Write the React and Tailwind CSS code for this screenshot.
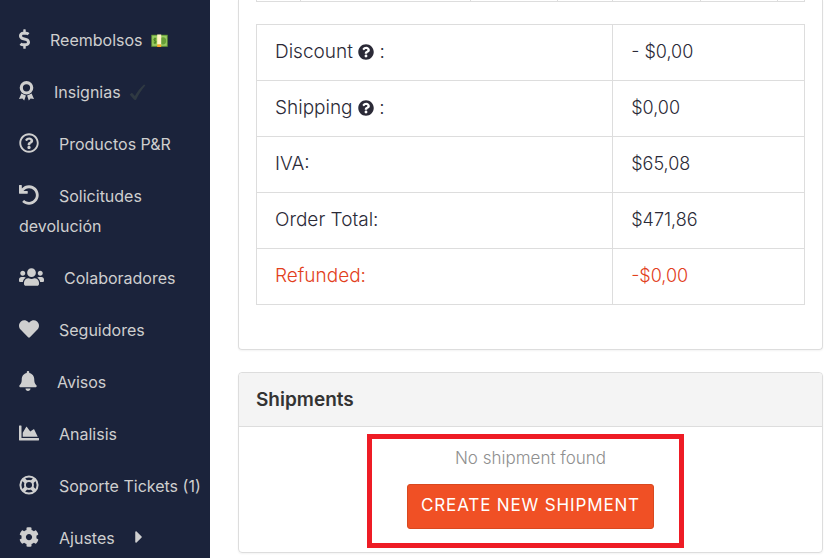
import React from 'react';
import {
  FaDollarSign, FaRegQuestionCircle, FaUndo, FaUsers, FaHeart, FaBell,
  FaChartArea, FaCog, FaCaretRight, FaQuestionCircle
} from 'react-icons/fa';

const AwardIcon = ({ className }) => (
  <svg viewBox="0 0 15 20" className={className} aria-hidden="true">
    <circle cx="7.5" cy="6.8" r="5.2" fill="none" stroke="currentColor" strokeWidth="3.2" />
    <path d="M2.4 12.6Q4.2 13.8 6.9 14.6L5.2 19.4L3.4 17.6L0 18Z" fill="currentColor" />
    <path d="M12.6 12.6Q10.8 13.8 8.1 14.6L9.8 19.4L11.6 17.6L15 18Z" fill="currentColor" />
  </svg>
);

const LifeRingIcon = ({ className }) => (
  <svg viewBox="0 0 20 20" className={className} fill="none" stroke="currentColor" aria-hidden="true">
    <circle cx="10" cy="10" r="8.6" strokeWidth="2" />
    <circle cx="10" cy="10" r="4" strokeWidth="1.9" />
    <path d="M4 4L7.2 7.2M16 4L12.8 7.2M4 16L7.2 12.8M16 16L12.8 12.8" strokeWidth="3.8" />
  </svg>
);

const BanknoteIcon = () => (
  <svg viewBox="0 0 17 14" className="ml-1 inline-block h-[14px] w-[17px] align-[-2px]" aria-hidden="true">
    <rect x="0.3" y="0.8" width="16.4" height="12" fill="#689f38" />
    <rect x="1.2" y="1.8" width="14.6" height="10" fill="#9ccc65" />
    <ellipse cx="12" cy="6.8" rx="3.2" ry="3.6" fill="#689f38" />
    <ellipse cx="4" cy="6.8" rx="2.6" ry="3.6" fill="#8bc34a" />
    <path d="M5 5.2C4.4 4.4 2.8 4.6 2.9 5.7C3 6.9 5.1 6.6 5.1 7.9C5.1 9 3.4 9.2 2.8 8.3M4 3.8V9.9" fill="none" stroke="#33691e" strokeWidth="0.7" />
    <rect x="6.2" y="0.5" width="4" height="10" fill="#fff3c4" />
    <rect x="6.2" y="10.5" width="4" height="2.5" fill="#ffa726" />
  </svg>
);

const TickIcon = () => (
  <svg viewBox="0 0 17 17" className="ml-1 inline-block h-[17px] w-[17px] align-[-3px]" aria-hidden="true">
    <path d="M0.7 10.4L2.9 8.8L5.9 12.1C8.2 8 11 4.1 15 0.6L16.4 1.2C12.6 5.8 9.6 10.4 7.2 15.4Q5.8 16.6 4.7 15.2Z" fill="#2f3942" />
  </svg>
);

const menu = [
  { label: 'Reembolsos', icon: FaDollarSign, size: 'w-[11px]', extra: <BanknoteIcon /> },
  { label: 'Insignias', icon: AwardIcon, size: 'w-[15px]', extra: <TickIcon /> },
  { label: 'Productos P&R', icon: FaRegQuestionCircle, size: 'w-5' },
  { label: 'Solicitudes devolución', icon: FaUndo, size: 'w-5' },
  { label: 'Colaboradores', icon: FaUsers, size: 'w-[25px]' },
  { label: 'Seguidores', icon: FaHeart, size: 'w-5' },
  { label: 'Avisos', icon: FaBell, size: 'w-[18px]' },
  { label: 'Analisis', icon: FaChartArea, size: 'w-5' },
  { label: 'Soporte Tickets (1)', icon: LifeRingIcon, size: 'w-5' },
  { label: 'Ajustes', icon: FaCog, size: 'w-5', extra: <FaCaretRight className="ml-4 inline-block h-5 w-2 align-[-3px]" /> },
];

const totals = [
  { label: 'Discount', help: true, value: '- $0,00' },
  { label: 'Shipping', help: true, value: '$0,00' },
  { label: 'IVA:', value: '$65,08' },
  { label: 'Order Total:', value: '$471,86' },
  { label: 'Refunded:', value: '-$0,00', refunded: true },
];

const Sidebar = () => (
  <nav className="w-[210px] shrink-0 overflow-hidden bg-[#1b233b] pt-[14px] text-[#cfcfcf]">
    <ul>
      {menu.map(({ label, icon: Icon, size, extra }) => (
        <li key={label}>
          <a href="#" className="block py-[11px] pl-[19px] text-base leading-[30px] hover:text-white">
            <Icon className={`mr-5 inline-block h-5 align-[-3px] ${size}`} />
            {label} {extra}
          </a>
        </li>
      ))}
    </ul>
  </nav>
);

const ItemsTable = () => (
  <table className="w-full table-fixed border-collapse border border-t-0 border-[#dddddd]">
    <tbody>
      <tr className="h-px">
        <td className="w-[8%] border-r border-[#dddddd] p-0" />
        <td className="w-[31%] border-r border-[#dddddd] p-0" />
        <td className="w-[16%] border-r border-[#dddddd] p-0" />
        <td className="w-[10%] border-r border-[#dddddd] p-0" />
        <td className="w-[16%] border-r border-[#dddddd] p-0" />
        <td className="w-[14%] border-r border-[#dddddd] p-0" />
        <td className="p-0" />
      </tr>
    </tbody>
  </table>
);

const TotalsTable = () => (
  <table className="mt-[22px] w-full table-fixed border-collapse text-lg font-light text-[#2b2a37]">
    <tbody>
      {totals.map((row) => (
        <tr key={row.label} className={`h-14 ${row.refunded ? 'text-[#e2401c]' : ''}`}>
          <th scope="row" className="w-[65%] border border-[#dddddd] px-[18px] py-0 text-left text-[19px] font-light">
            {row.label}
            {row.help && (
              <> <FaQuestionCircle className="inline-block h-4 w-4 align-[-2px]" /> :</>
            )}
          </th>
          <td className="border border-[#dddddd] px-[18px] py-0">{row.value}</td>
        </tr>
      ))}
    </tbody>
  </table>
);

const Shipments = () => (
  <section className="mt-[22px] rounded border border-[#dddddd] shadow-xs">
    <h2 className="rounded-t border-b border-[#dddddd] bg-[#f4f4f4] px-[17px] py-[13px] text-[19px] leading-[27px] font-semibold text-[#333333]">
      Shipments
    </h2>
    <div className="flex justify-center pt-[15px] pb-[23px]">
      <div className="relative flex flex-col items-center">
        <p className="text-[17px] leading-8 font-light text-[#8f8f8f]">No shipment found</p>
        <button
          type="button"
          className="mt-[10px] h-[45px] rounded-[3px] border border-[#d9481f] bg-[#f05025] px-[13px] text-[17px] tracking-wider text-white uppercase"
        >
          Create new shipment
        </button>
        <div className="pointer-events-none absolute -top-2 -right-[30px] -bottom-[19px] -left-[40px] border-5 border-[#ee1c25]" />
      </div>
    </div>
  </section>
);

export default function App() {
  return (
    <div className="flex h-screen overflow-hidden bg-white font-[Inter,sans-serif]">
      <Sidebar />
      <main className="min-w-0 flex-1 pr-[7px] pl-7">
        <section className="rounded-b border border-t-0 border-[#dddddd] px-[17px] pb-11 shadow-xs">
          <ItemsTable />
          <TotalsTable />
        </section>
        <Shipments />
      </main>
    </div>
  );
}
